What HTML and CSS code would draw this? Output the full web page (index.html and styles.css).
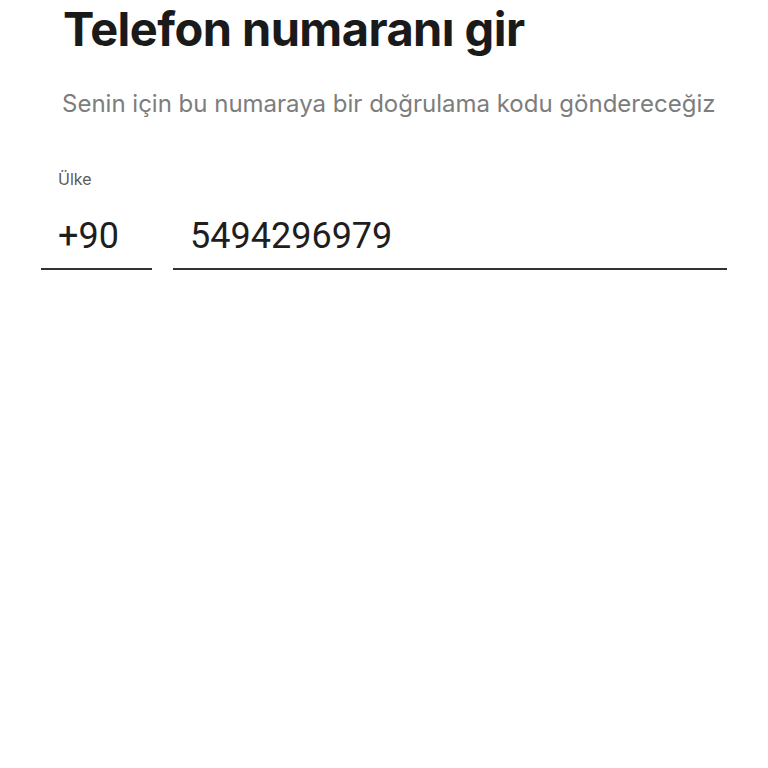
FILE: index.html
```html
<!DOCTYPE html>
<html lang="tr">
<head>
<meta charset="utf-8">
<link rel="stylesheet" href="styles.css">
</head>
<body>
<main class="page">
  <h1 class="title">Telefon numaranı gir</h1>
  <p class="subtitle">Senin için bu numaraya bir doğrulama kodu göndereceğiz</p>
  <div class="label">Ülke</div>
  <div class="fields">
    <div class="field code">+90</div>
    <div class="field number">5494296979</div>
  </div>
</main>
</body>
</html>
```
FILE: styles.css
```css
html, body {
  margin: 0;
  padding: 0;
  background: #ffffff;
}
.page {
  width: 768px;
  height: 768px;
  padding: 0 41px;
  box-sizing: border-box;
}
.title {
  margin: 0;
  padding: 0 0 0 22px;
  font-family: Inter, Lato, sans-serif;
  font-weight: 700;
  font-size: 47px;
  line-height: 58px;
  letter-spacing: -0.55px;
  color: #1a1a1a;
}
.subtitle {
  margin: 0;
  padding: 31px 0 0 21px;
  font-family: Inter, Lato, sans-serif;
  font-size: 24px;
  line-height: 30px;
  color: #7d7d7d;
}
.label {
  padding: 50px 0 0 17px;
  font-family: Inter, sans-serif;
  font-size: 16px;
  line-height: 20px;
  color: #5a5a5a;
}
.fields {
  display: flex;
  gap: 21px;
  margin-top: 22px;
}
.field {
  font-family: Roboto, sans-serif;
  font-size: 36px;
  line-height: 50px;
  color: #1e1e1e;
  border-bottom: 2px solid #333333;
  padding-bottom: 7px;
}
.code {
  width: 111px;
  padding-left: 17px;
  box-sizing: border-box;
}
.number {
  flex: 1;
  padding-left: 17px;
}
```
